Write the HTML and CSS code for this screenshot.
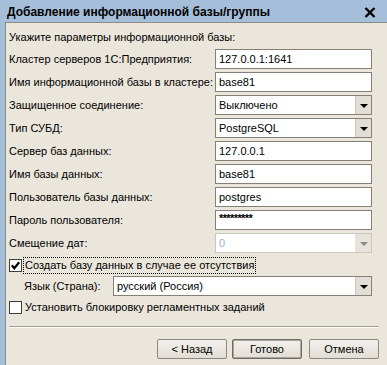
FILE: index.html
```html
<!DOCTYPE html>
<html>
<head>
    <title>Добавление информационной базы/группы</title>
    <link rel="stylesheet" href="styles.css">
</head>
<body>
    <div class="window">
        <div class="titlebar">
            <span class="title">Добавление информационной базы/группы</span>
            <svg class="close" width="12" height="11" viewBox="0 0 12 11">
                <path d="M1.5 1 L10.5 10 M10.5 1 L1.5 10" stroke="#000" stroke-width="2.4" fill="none"/>
            </svg>
        </div>

        <div class="panel">
            <div class="hint">Укажите параметры информационной базы:</div>

            <div class="form">
                <label>Кластер серверов 1С:Предприятия:</label>
                <div class="field">127.0.0.1:1641</div>

                <label>Имя информационной базы в кластере:</label>
                <div class="field">base81</div>

                <label>Защищенное соединение:</label>
                <div class="field combo"><span class="value">Выключено</span><span class="drop"></span></div>

                <label>Тип СУБД:</label>
                <div class="field combo"><span class="value">PostgreSQL</span><span class="drop"></span></div>

                <label>Сервер баз данных:</label>
                <div class="field">127.0.0.1</div>

                <label>Имя базы данных:</label>
                <div class="field">base81</div>

                <label>Пользователь базы данных:</label>
                <div class="field">postgres</div>

                <label>Пароль пользователя:</label>
                <div class="field password">*********</div>

                <label>Смещение дат:</label>
                <div class="field combo disabled"><span class="value">0</span><span class="drop"></span></div>
            </div>

            <div class="check-row first">
                <span class="box">
                    <svg width="11" height="11" viewBox="0 0 11 11">
                        <path d="M1.8 5.2 L4.3 8.2 L9.2 2.2" stroke="#000" stroke-width="2.2" fill="none"/>
                    </svg>
                </span>
                <span class="caption focused">Создать базу данных в случае ее отсутствия</span>
            </div>

            <div class="lang-row">
                <label>Язык (Страна):</label>
                <div class="field combo wide"><span class="value">русский (Россия)</span><span class="drop"></span></div>
            </div>

            <div class="check-row">
                <span class="box"></span>
                <span class="caption">Установить блокировку регламентных заданий</span>
            </div>

            <div class="sep"></div>

            <div class="buttons">
                <button>&lt; Назад</button>
                <button class="default">Готово</button>
                <button class="cancel">Отмена</button>
            </div>
        </div>
    </div>
</body>
</html>
```

FILE: styles.css
```css
body {
    margin: 0;
    background-color: #a5bed9;
    font-family: 'Liberation Sans', Arial, sans-serif;
    font-size: 11px;
    color: #000;
    overflow: hidden;
}

.window {
    width: 387px;
    height: 365px;
    display: flex;
    flex-direction: column;
}

.titlebar {
    height: 22px;
    display: flex;
    align-items: center;
    justify-content: space-between;
    padding: 0 11px 0 7px;
}

.title {
    font-weight: bold;
    font-size: 12px;
    line-height: 16px;
    margin-top: 1px;
}

.close {
    display: block;
    margin-top: 2px;
}

.panel {
    flex: 1;
    margin-left: 5px;
    width: 378px;
    border: 1px solid #8c8a85;
    border-bottom: none;
    background-color: #ebe6dc;
    padding: 6px 0 0 3px;
    box-sizing: content-box;
}

.hint {
    line-height: 16px;
}

/* label / input grid */
.form {
    display: grid;
    grid-template-columns: 206px 157px;
    grid-auto-rows: 20px;
    row-gap: 3px;
    margin-top: 4px;
}

.form label,
.lang-row label {
    display: flex;
    align-items: center;
    white-space: nowrap;
}

.field {
    box-sizing: border-box;
    height: 20px;
    border: 1px solid #857f75;
    background-color: #fff;
    padding-left: 3px;
    display: flex;
    align-items: center;
    white-space: nowrap;
}

.field.password {
    font-size: 11px;
    font-weight: bold;
    letter-spacing: -0.6px;
    align-items: flex-start;
    padding-top: 1px;
}

.combo {
    padding-right: 0;
}

.combo .value {
    flex: 1;
}

.drop {
    width: 15px;
    height: 18px;
    background-color: #e2ded5;
    border-left: 1px solid #ccc7bd;
    display: flex;
    align-items: center;
    justify-content: center;
}

.drop::after {
    content: '';
    border-left: 4px solid transparent;
    border-right: 4px solid transparent;
    border-top: 4px solid #000;
    margin-top: 1px;
}

.combo.disabled {
    border-color: #cdc8be;
    color: #9fb1cb;
}

.combo.disabled .drop {
    background-color: #e7e3db;
    border-left-color: #e7e3db;
}

.combo.disabled .drop::after {
    border-top-color: #8e8b85;
}

/* checkboxes */
.check-row {
    display: flex;
    align-items: center;
    height: 17px;
    margin-top: 3px;
}

.check-row.first {
    margin-top: 4px;
}

.box {
    box-sizing: border-box;
    width: 13px;
    height: 13px;
    border: 1px solid #3d3d3d;
    background-color: #fff;
    display: flex;
    align-items: center;
    justify-content: center;
    margin-right: 1px;
}

.box svg {
    display: block;
}

.caption {
    padding: 0 1px 0 1px;
    line-height: 15px;
    border: 1px dotted transparent;
}

.caption.focused {
    border-color: #000;
}

.lang-row {
    display: flex;
    margin: 2px 0 0 15px;
    height: 20px;
}

.lang-row label {
    width: 89px;
}

.field.wide {
    width: 259px;
}

.sep {
    height: 1px;
    background-color: #a19d95;
    border-bottom: 1px solid #fff;
    margin: 10px 4px 0 0;
    width: 370px;
}

/* dialog buttons */
.buttons {
    display: flex;
    justify-content: flex-end;
    margin-top: 11px;
    width: 370px;
}

button {
    font-family: 'Liberation Sans', Arial, sans-serif;
    font-size: 11px;
    width: 70px;
    height: 20px;
    padding: 0;
    margin-left: 5px;
    border: 1px solid #8a877f;
    border-radius: 2px;
    background: linear-gradient(#f2f0eb, #e2ded6);
    color: #000;
}

button.default {
    border-color: #6e6b64;
    box-shadow: inset 0 0 0 1px #aaa69d;
}

button.cancel {
    margin-left: 7px;
}
```
